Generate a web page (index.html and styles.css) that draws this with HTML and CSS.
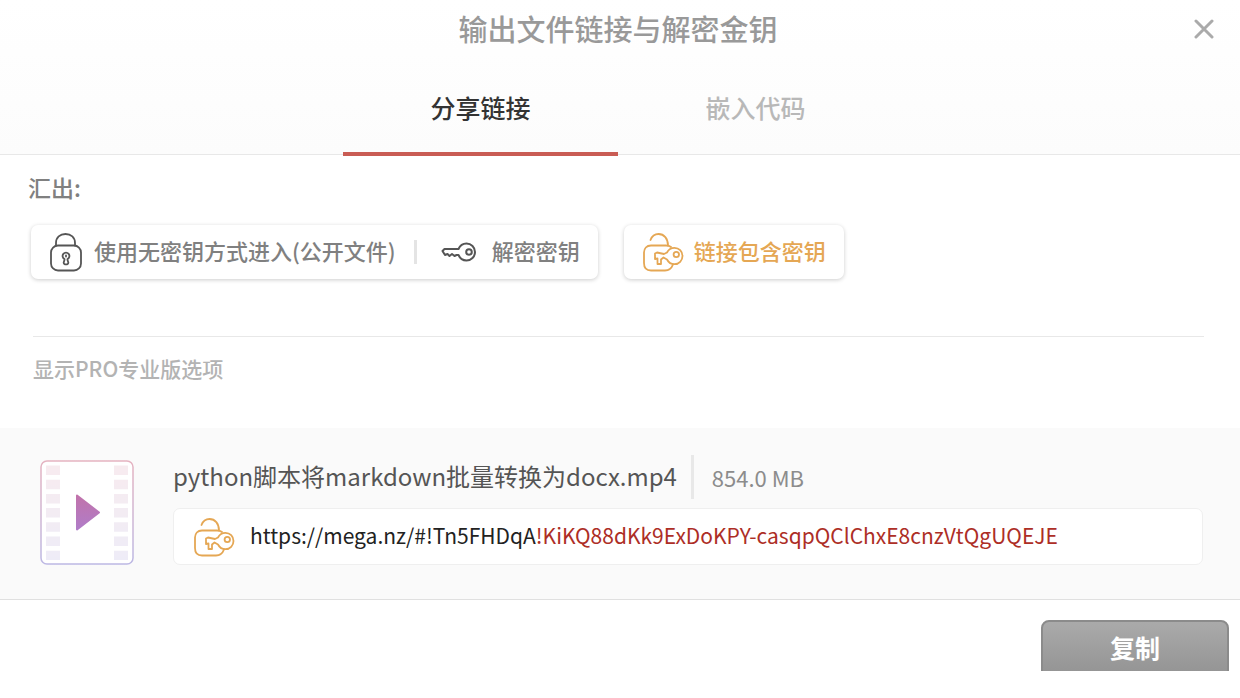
FILE: index.html
```
<!DOCTYPE html>
<html lang="zh-CN">
<head>
<meta charset="utf-8">
<title>输出文件链接与解密金钥</title>
<link rel="stylesheet" href="styles.css">
</head>
<body>

<!-- 图标 -->
<svg class="icon-defs" width="0" height="0" aria-hidden="true">
	<symbol id="icon-lock" viewBox="0 0 34 40">
		<path d="M7 13.500V11C7 5.500 11 2 16.500 2S26 5.500 26 11V13.500"/>
		<rect x="2" y="13.500" width="30" height="25" rx="7"/>
		<path d="M15.500 27A3.400 3.400 0 1 1 18.500 27C18.300 28 19 29 19.300 30.500C19.700 33 14.300 33 14.700 30.500C15 29 15.700 28 15.500 27Z"/>
		<path d="M17 23.500V24.500"/>
	</symbol>
	<symbol id="icon-key" viewBox="0 0 36 20">
		<path d="M17.500 7H3.500L1.500 9L4 13L6.500 12L8.500 14L11 12L13.500 14L15.500 13H17.500C19 16.500 22 18.500 25.500 18.500A8.500 8.500 0 1 0 25.500 1.500C22 1.500 19 3.500 17.500 7Z"/>
		<circle cx="28" cy="10" r="2.800"/>
	</symbol>
	<symbol id="icon-lock-key" viewBox="0 0 42 40">
		<path d="M8.500 8C10 4 13 2 16.500 2C22 2 26 6.500 26 13.500"/>
		<path d="M29 15C27.500 13.800 25.500 13.500 24 13.500H9C4.500 13.500 2 16.500 2 20.500V31C2 35.500 4.500 38.500 9 38.500H23C27 38.500 29.500 36.500 31 32.500"/>
		<path d="M25 20.500C26.500 17.500 29.500 15.800 32.500 15.800C37 15.800 40.500 19.500 40.500 24C40.500 28.500 37 32.200 32.500 32.200C29 32.200 26.500 30.500 25 27.500L21.500 25.500L19 27.500V32H15.500V26.500L13 27V21.500L15 20.500L22 22Z"/>
		<circle cx="34.300" cy="22.500" r="2.700"/>
	</symbol>
</svg>

<div class="dialog">
	<header class="dialog-header">
		<h1 class="dialog-title">输出文件链接与解密金钥</h1>
		<button class="dialog-close" type="button" aria-label="关闭">
			<svg width="20" height="20" viewBox="0 0 20 20"><path d="M2 2L18 18M18 2L2 18"/></svg>
		</button>
		<nav class="tabs">
			<button class="tab active" type="button">分享链接</button>
			<button class="tab" type="button">嵌入代码</button>
		</nav>
	</header>

	<section class="export">
		<h2 class="export-label">汇出:</h2>
		<div class="export-options">
			<div class="card">
				<label class="option">
					<input type="radio" name="export">
					<svg class="icon-lock"><use href="#icon-lock"/></svg>
					<span class="option-text">使用无密钥方式进入(公开文件)</span>
				</label>
				<label class="option option-key">
					<input type="radio" name="export">
					<svg class="icon-key"><use href="#icon-key"/></svg>
					<span class="option-text">解密密钥</span>
				</label>
			</div>
			<div class="card">
				<label class="option option-full">
					<input type="radio" name="export" checked>
					<svg class="icon-lock-key"><use href="#icon-lock-key"/></svg>
					<span class="option-text">链接包含密钥</span>
				</label>
			</div>
		</div>
		<div class="pro">
			<a class="pro-link" href="#">显示PRO专业版选项</a>
		</div>
	</section>

	<section class="file">
		<svg class="file-thumb" viewBox="0 0 94 106">
			<defs>
				<linearGradient id="film" gradientUnits="userSpaceOnUse" x1="0" y1="0" x2="0" y2="106">
					<stop offset="0" stop-color="#e6b3c0"/>
					<stop offset="1" stop-color="#bcb8e4"/>
				</linearGradient>
				<linearGradient id="play" x1="0" y1="0" x2="0" y2="1">
					<stop offset="0" stop-color="#c173ab"/>
					<stop offset="1" stop-color="#b07cc8"/>
				</linearGradient>
			</defs>
			<rect x="1" y="2" width="92" height="103" rx="6" fill="#fff" stroke="url(#film)" stroke-width="1.500"/>
			<path d="M13 6.500V101M81 6.500V101" stroke="url(#film)" stroke-width="14" stroke-dasharray="9.500 4.700" opacity=".25"/>
			<path d="M37 36.500L59 53.500L37 70.500Z" fill="url(#play)" stroke="url(#play)" stroke-width="2" stroke-linejoin="round"/>
		</svg>
		<div class="file-info">
			<div class="file-head">
				<span class="file-name">python脚本将markdown批量转换为docx.mp4</span>
				<span class="file-size">854.0 MB</span>
			</div>
			<div class="file-link">
				<svg class="icon-lock-key"><use href="#icon-lock-key"/></svg>
				<span class="file-url">https://mega.nz/#!Tn5FHDqA<span class="file-key">!KiKQ88dKk9ExDoKPY-casqpQClChxE8cnzVtQgUQEJE</span></span>
			</div>
		</div>
	</section>

	<footer class="dialog-footer">
		<button class="copy" type="button">复制</button>
	</footer>
</div>

</body>
</html>
```
FILE: styles.css
```
body{
	margin: 0;
	background: #fff;color: #808080;
	font-family: "Noto Sans CJK SC",sans-serif;font-size: 22px;font-weight: 500;
}

button{
	padding: 0;border: none;background: none;
	font-family: inherit;font-weight: inherit;cursor: pointer;
}

a{text-decoration: none;}

svg{flex: none;}

/* 图标 */
.icon-defs{display: block;}
.icon-lock,.icon-key,.icon-lock-key{
	fill: none;stroke: #555;stroke-width: 1.8px;
	stroke-linecap: round;stroke-linejoin: round;
}
.icon-lock{width: 34px;height: 40px;}
.icon-key{width: 36px;height: 20px;stroke-width: 2px;}
.icon-lock-key{width: 42px;height: 40px;stroke: #e5a754;}

/* 头部 */
.dialog-header{
	display: grid;grid-template-columns: 1fr auto 1fr;
	border-bottom: 1px solid #e8e8e8;
	background: linear-gradient(#fff,#fcfcfc);
}
.dialog-title{
	grid-column: 2;
	margin: 0;padding: 0 4px 4px 0;
	line-height: 56px;font-size: 29px;font-weight: inherit;color: #999;
}
.dialog-close{
	justify-self: end;
	width: 20px;height: 58px;margin-right: 26px;
}
.dialog-close svg{display: block;fill: none;stroke: #aaa;stroke-width: 3px;stroke-linecap: round;}

.tabs{
	grid-column: 1 / -1;
	display: flex;justify-content: center;
	margin-bottom: -2px;padding-right: 4px;
}
.tab{
	width: 275px;height: 96px;padding-top: 2px;
	border-bottom: 4px solid transparent;
	font-size: 25px;color: #b8b8b8;
}
.tab.active{border-bottom-color: #c95c54;color: #333;}

/* 汇出 */
.export{padding: 14px 36px 0 31px;}
.export-label{
	margin: 0 0 20px -3px;
	line-height: 36px;font-size: 23px;font-weight: inherit;
}
.export-options{display: flex;gap: 26px;}
.card{
	display: flex;align-items: center;
	height: 54px;padding: 0 18px;
	border-radius: 7px;
	background: #fff;
	box-shadow: 0 1px 4px rgba(0,0,0,.2);
}
.option{display: flex;align-items: center;white-space: nowrap;cursor: pointer;}
.option input{appearance: none;width: 0;height: 0;margin: 0;}
.option .icon-lock{margin-right: 11px;}
.option .icon-key{margin-right: 15px;}
.option .icon-lock-key{margin-right: 10px;}
.option-text{padding-bottom: 4px;}
.option-key{
	margin-left: 18px;padding-left: 27px;
	background: linear-gradient(#e4e4e4,#e4e4e4) left center/3px 24px no-repeat;
}
.option-full{color: #e5a754;}

.pro{
	margin: 57px 0 0 2px;padding: 14px 0 43px;
	border-top: 1px solid #e8e8e8;
	line-height: 33px;
}
.pro-link{font-size: 21px;color: #b3b3b3;}

/* 文件 */
.file{
	display: flex;align-items: flex-end;gap: 39px;
	padding: 27px 37px 34px 40px;
	border-bottom: 1px solid #e0e0e0;
	background: #fafafa;
	font-weight: 400;
}
.file-thumb{width: 94px;height: 106px;}
.file-info{flex: 1;}
.file-head{display: flex;align-items: center;height: 44px;margin-bottom: 9px;white-space: nowrap;}
.file-name{padding-bottom: 3px;font-size: 24px;color: #555;}
.file-size{
	margin-left: 14px;padding-left: 18px;
	border-left: 3px solid #e8e8e8;
	line-height: 44px;font-size: 22px;color: #8c8c8c;
}
.file-link{
	display: flex;align-items: center;
	height: 55px;padding: 0 19px;
	border: 1px solid #efefef;border-radius: 7px;
	background: #fff;
}
.file-url{margin-left: 15px;padding-bottom: 3px;font-size: 21px;color: #222;white-space: nowrap;}
.file-key{color: #ad2e26;}

/* 底部 */
.dialog-footer{
	display: flex;justify-content: flex-end;
	height: 51px;padding: 20px 11px 0;
	overflow: hidden;
}
.copy{
	width: 188px;height: 58px;padding-bottom: 4px;
	border: 2px solid #8b8b8b;border-radius: 8px;
	background: linear-gradient(#aaa,#939393);
	font-size: 25px;font-weight: 700;color: #fff;
}
```
